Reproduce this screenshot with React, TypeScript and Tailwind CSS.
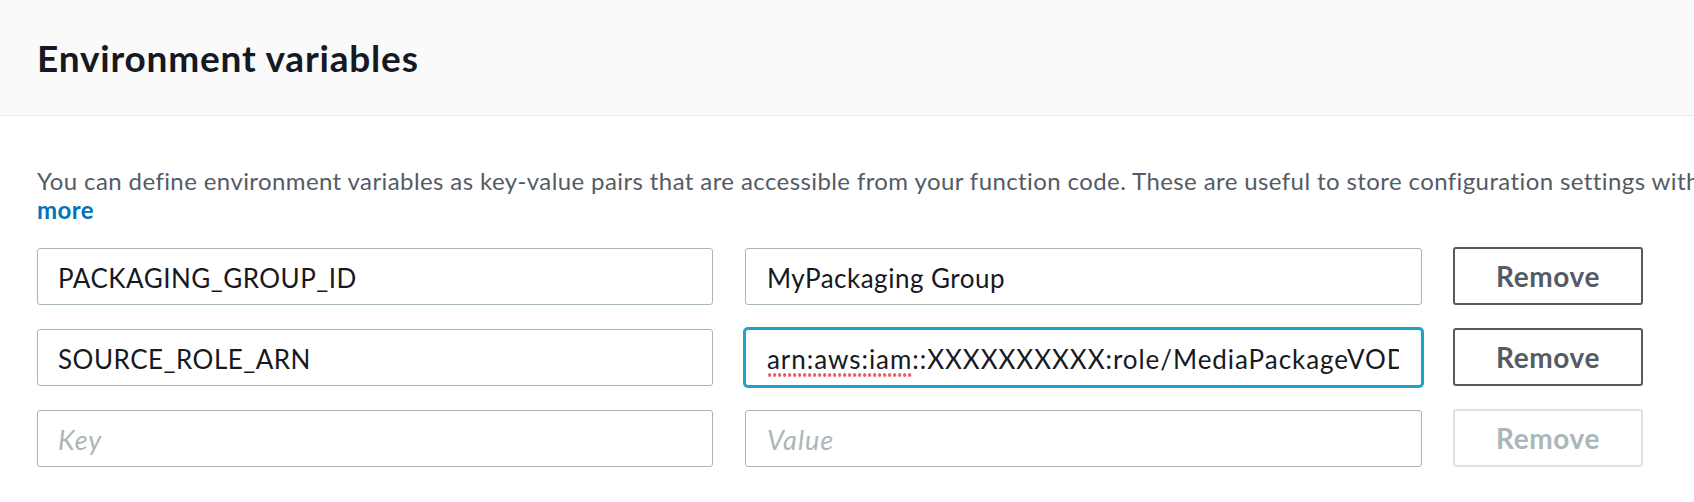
import React from "react";

const FONT = "font-['Lato','Open_Sans','Liberation_Sans',sans-serif]";

const INPUT_BASE = `h-[57px] shrink-0 rounded-[3px] border border-[#aab7b8] bg-white pt-[4px] text-[26px] tracking-[0.5px] text-[#16191f] outline-none placeholder:italic placeholder:text-[27px] placeholder:tracking-[1px] placeholder:text-[#aab7b8] ${FONT}`;

function KeyInput({ value, placeholder }: { value?: string; placeholder?: string }) {
  return (
    <input
      readOnly
      value={value ?? ""}
      placeholder={placeholder}
      className={`w-[676px] px-[20px] ${INPUT_BASE}`}
    />
  );
}

function ValueInput({ value, placeholder }: { value?: string; placeholder?: string }) {
  return (
    <input
      readOnly
      value={value ?? ""}
      placeholder={placeholder}
      className={`ml-[32px] w-[677px] px-[21px] ${INPUT_BASE}`}
    />
  );
}

function FocusedValue() {
  return (
    <div
      role="textbox"
      className="ml-[32px] w-[677px] h-[57px] shrink-0 rounded-[3px] border border-[#1ba3cb] shadow-[0_0_0_2px_#1ba3cb] bg-white pl-[21px] pr-[22px] pt-[4px] flex items-center"
    >
      <div className="overflow-hidden whitespace-nowrap text-[26px] tracking-[0.95px] text-[#16191f] w-full">
        <span className="pb-[2px] bg-[radial-gradient(circle,#ef5b62_1.5px,transparent_2px)] bg-[length:5px_4px] bg-repeat-x bg-bottom">
          arn:aws:iam
        </span>
        ::XXXXXXXXXX:role/MediaPackageVOD_Role
      </div>
    </div>
  );
}

function RemoveButton({ disabled }: { disabled?: boolean }) {
  return (
    <button
      disabled={disabled}
      className={`ml-[31px] w-[190px] h-[58px] shrink-0 rounded-[3px] bg-white text-[28px] font-bold tracking-[0.6px] flex items-center justify-center ${FONT} ${
        disabled
          ? "border-2 border-[#dde2e2] text-[#aab7b8]"
          : "border-2 border-[#545b64] text-[#545b64]"
      }`}
    >
      Remove
    </button>
  );
}

export default function App() {
  return (
    <div className={`w-[1694px] h-[502px] overflow-hidden bg-white ${FONT}`}>
      <div className="h-[116px] bg-[#fafafa] border-b border-[#e6eaea] flex items-center pl-[37px]">
        <h2 className="text-[37px] font-bold tracking-[0.8px] text-[#16191f] leading-[44px]">
          Environment variables
        </h2>
      </div>
      <div className="pl-[37px] pt-[50px]">
        <p className="text-[24px] leading-[29px] tracking-[0.4px] text-[#545b64] whitespace-nowrap">
          You can define environment variables as key-value pairs that are accessible from your function code. These are useful to store configuration settings without changing function code. Learn
        </p>
        <p className="text-[24px] leading-[29px] tracking-[0.4px]">
          <a href="#" className="font-bold text-[#0073bb]">
            more
          </a>
        </p>
        <div className="mt-[23px] flex flex-col gap-[23px]">
          <div className="flex items-center">
            <KeyInput value="PACKAGING_GROUP_ID" />
            <ValueInput value="MyPackaging Group" />
            <RemoveButton />
          </div>
          <div className="flex items-center">
            <KeyInput value="SOURCE_ROLE_ARN" />
            <FocusedValue />
            <RemoveButton />
          </div>
          <div className="flex items-center">
            <KeyInput placeholder="Key" />
            <ValueInput placeholder="Value" />
            <RemoveButton disabled />
          </div>
        </div>
      </div>
    </div>
  );
}
